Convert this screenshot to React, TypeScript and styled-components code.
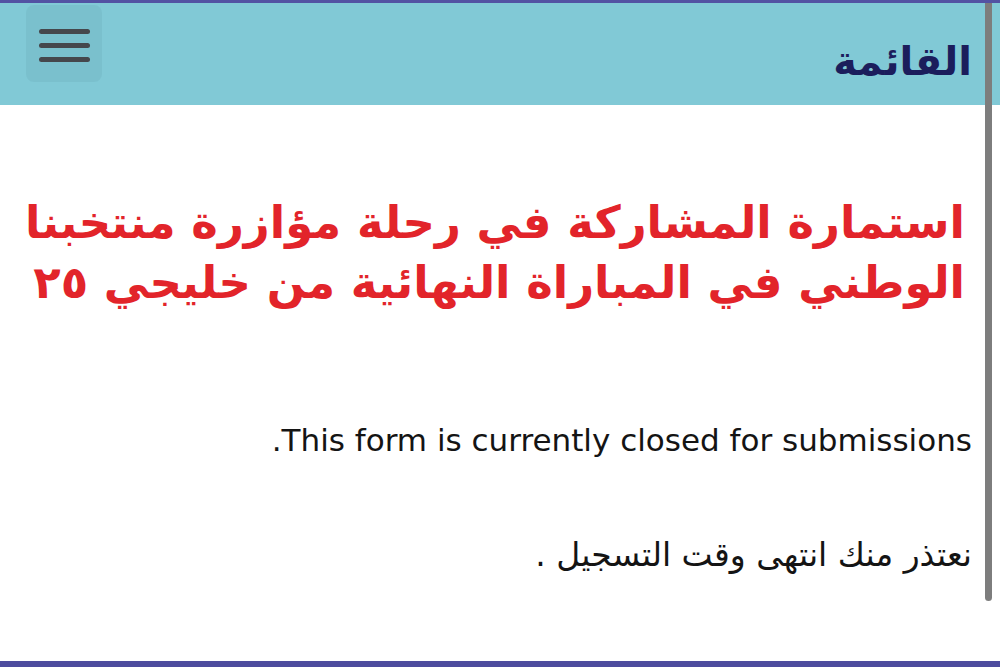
import React from 'react';
import styled, { createGlobalStyle } from 'styled-components';

const GlobalStyle = createGlobalStyle`
  html, body {
    margin: 0;
    padding: 0;
    background: #ffffff;
  }
  * {
    box-sizing: border-box;
  }
`;

const Page = styled.div`
  position: relative;
  width: 1000px;
  height: 667px;
  overflow: hidden;
  display: flex;
  flex-direction: column;
  border-top: 3px solid #5352a3;
  border-bottom: 6px solid #4d4c9e;
  direction: rtl;
  font-family: 'DejaVu Sans', 'Liberation Sans', sans-serif;
`;

const Header = styled.header`
  height: 102px;
  flex-shrink: 0;
  display: flex;
  align-items: flex-start;
  justify-content: space-between;
  padding: 0 28px 0 26px;
  background: #81c9d6;
`;

const Title = styled.h1`
  margin: 33px 0 0;
  font-size: 40px;
  font-weight: bold;
  color: #1b1d5c;
  line-height: 50px;
`;

const MenuButton = styled.button`
  margin-top: 2px;
  width: 76px;
  height: 77px;
  display: flex;
  flex-direction: column;
  align-items: center;
  justify-content: flex-start;
  gap: 9px;
  padding-top: 24px;
  border: none;
  border-radius: 8px;
  background: rgba(40, 90, 100, 0.07);
  cursor: pointer;
`;

const MenuLine = styled.span`
  display: block;
  width: 51px;
  height: 5px;
  border-radius: 3px;
  background: #45474c;
`;

const Content = styled.main`
  flex: 1;
  padding: 0 28px 0 20px;
`;

const Headline = styled.h2`
  margin: 88px 7px 0 0;
  font-size: 45px;
  font-weight: bold;
  line-height: 60px;
  color: #e2242a;
`;

const Notice = styled.p<{ $top: number; $size: number }>`
  margin: ${p => p.$top}px 0 0;
  font-size: ${p => p.$size}px;
  line-height: 40px;
  color: #141414;
`;

const ScrollThumb = styled.div`
  position: absolute;
  top: 0;
  right: 8px;
  width: 7px;
  height: 598px;
  border-radius: 0 0 4px 4px;
  background: #7d7d7d;
`;

export default function App() {
  return (
    <>
      <GlobalStyle />
      <Page>
        <Header>
          <Title>القائمة</Title>
          <MenuButton aria-label="menu">
            <MenuLine />
            <MenuLine />
            <MenuLine />
          </MenuButton>
        </Header>
        <Content>
          <Headline>
            استمارة المشاركة في رحلة مؤازرة منتخبنا الوطني في المباراة النهائية من خليجي ٢٥
          </Headline>
          <Notice $top={107} $size={31}>
            This form is currently closed for submissions.
          </Notice>
          <Notice $top={75} $size={33}>
            نعتذر منك انتهى وقت التسجيل .
          </Notice>
        </Content>
        <ScrollThumb />
      </Page>
    </>
  );
}
